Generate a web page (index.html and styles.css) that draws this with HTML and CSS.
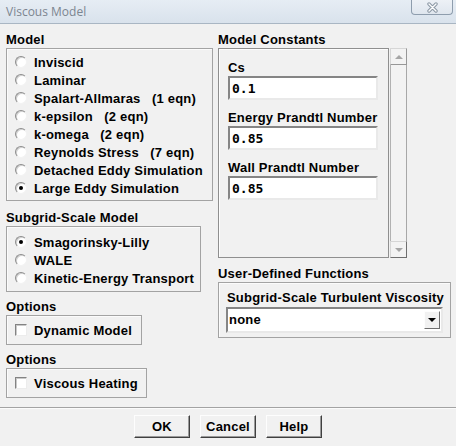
FILE: index.html
```html
<!DOCTYPE html>
<html lang="en">
<head>
    <meta charset="UTF-8">
    <title>Viscous Model</title>
    <link rel="stylesheet" href="styles.css">
</head>
<body>
    <div class="window">
        <div class="titlebar">
            <span class="title">Viscous Model</span>
            <button class="close-btn">
                <svg width="11" height="11" viewBox="0 0 11 11">
                    <path d="M2 2 L9 9 M9 2 L2 9" stroke="#8b97a4" stroke-width="3.4" stroke-linecap="round"/>
                    <path d="M2 2 L9 9 M9 2 L2 9" stroke="#fbfcfd" stroke-width="1.4" stroke-linecap="round"/>
                </svg>
            </button>
        </div>

        <div class="content">
            <div class="col col-left">
                <div class="group-label">Model</div>
                <div class="frame model-frame">
                    <label class="radio"><span class="radio-mark"></span>Inviscid</label>
                    <label class="radio"><span class="radio-mark"></span>Laminar</label>
                    <label class="radio"><span class="radio-mark"></span>Spalart-Allmaras   (1 eqn)</label>
                    <label class="radio"><span class="radio-mark"></span>k-epsilon   (2 eqn)</label>
                    <label class="radio"><span class="radio-mark"></span>k-omega   (2 eqn)</label>
                    <label class="radio"><span class="radio-mark"></span>Reynolds Stress   (7 eqn)</label>
                    <label class="radio"><span class="radio-mark"></span>Detached Eddy Simulation</label>
                    <label class="radio"><span class="radio-mark checked"></span>Large Eddy Simulation</label>
                </div>

                <div class="group-label spaced">Subgrid-Scale Model</div>
                <div class="frame subgrid-frame">
                    <label class="radio"><span class="radio-mark checked"></span>Smagorinsky-Lilly</label>
                    <label class="radio"><span class="radio-mark"></span>WALE</label>
                    <label class="radio"><span class="radio-mark"></span>Kinetic-Energy Transport</label>
                </div>

                <div class="group-label spaced-sm">Options</div>
                <div class="frame option-frame dynamic">
                    <label class="check"><span class="check-mark"></span>Dynamic Model</label>
                </div>

                <div class="group-label spaced-sm">Options</div>
                <div class="frame option-frame heating">
                    <label class="check"><span class="check-mark"></span>Viscous Heating</label>
                </div>
            </div>

            <div class="col col-right">
                <div class="group-label">Model Constants</div>
                <div class="constants-wrap">
                    <div class="constants-frame">
                        <div class="field">
                            <div class="field-label">Cs</div>
                            <input class="entry" type="text" value="0.1">
                        </div>
                        <div class="field">
                            <div class="field-label">Energy Prandtl Number</div>
                            <input class="entry" type="text" value="0.85">
                        </div>
                        <div class="field">
                            <div class="field-label">Wall Prandtl Number</div>
                            <input class="entry" type="text" value="0.85">
                        </div>
                    </div>
                    <div class="scrollbar">
                        <div class="scroll-btn"><span class="arrow-up"></span></div>
                        <div class="scroll-track"></div>
                        <div class="scroll-btn down"><span class="arrow-down"></span></div>
                    </div>
                </div>

                <div class="group-label spaced-udf">User-Defined Functions</div>
                <div class="frame udf-frame">
                    <div class="udf-label">Subgrid-Scale Turbulent Viscosity</div>
                    <div class="select">
                        <span class="select-value">none</span>
                        <span class="select-btn"><span class="arrow-black"></span></span>
                    </div>
                </div>
            </div>
        </div>

        <div class="footer">
            <button class="btn">OK</button>
            <button class="btn">Cancel</button>
            <button class="btn">Help</button>
        </div>
    </div>
</body>
</html>
```

FILE: styles.css
```css
* {
    margin: 0;
    padding: 0;
    box-sizing: border-box;
}

body {
    width: 456px;
    height: 446px;
    overflow: hidden;
    background: #f1f1f1;
    font-family: "Liberation Sans", Arial, sans-serif;
    font-size: 13px;
    font-weight: bold;
    letter-spacing: 0.2px;
    color: #000;
}

.window {
    display: flex;
    flex-direction: column;
    height: 446px;
}

/* title bar */
.titlebar {
    height: 24px;
    display: flex;
    justify-content: space-between;
    align-items: flex-start;
    background: linear-gradient(to bottom, #e6edf4, #d9e2ec);
    border-bottom: 1px solid #a9b6c3;
}

.title {
    font-family: "Open Sans", "Noto Sans", sans-serif;
    font-weight: normal;
    font-size: 12px;
    letter-spacing: 0;
    color: #7c8590;
    line-height: 23px;
    padding-left: 6px;
}

.close-btn {
    width: 42px;
    height: 15px;
    margin-right: 3px;
    border: 1px solid #8e9dad;
    border-top: none;
    border-radius: 0 0 4px 4px;
    background: linear-gradient(to bottom, #edf1f6, #dfe6ee);
    display: flex;
    align-items: center;
    justify-content: center;
}

/* layout */
.content {
    display: flex;
    gap: 5px;
    padding: 7px 5px 0 6px;
}

.col {
    display: flex;
    flex-direction: column;
    align-items: flex-start;
}

.col-left {
    width: 207px;
}

.col-right {
    width: 233px;
}

.group-label {
    line-height: 17px;
    white-space: nowrap;
}

.group-label.spaced {
    margin-top: 8px;
}

.group-label.spaced-sm {
    margin-top: 6px;
}

.group-label.spaced-udf {
    margin-top: 7px;
}

.frame {
    border: 1px solid #a3a3a3;
    box-shadow: inset 1px 1px 0 #fbfbfb;
}

.model-frame {
    width: 207px;
    padding: 4px 0 3px 8px;
}

.subgrid-frame {
    width: 195px;
    padding: 6px 0 4px 8px;
}

.option-frame {
    padding: 5px 0 5px 8px;
}

.option-frame.dynamic {
    width: 136px;
}

.option-frame.heating {
    width: 141px;
}

/* radio + checkbox */
.radio,
.check {
    display: flex;
    align-items: center;
    gap: 7px;
    height: 18px;
    white-space: pre;
}

.radio-mark {
    width: 12px;
    height: 12px;
    border-radius: 50%;
    background: #fff;
    border: 1px solid;
    border-color: #8d8d8d #f2f2f2 #f2f2f2 #8d8d8d;
    box-shadow: inset 1px 1px 0 #d0d0d0;
    display: flex;
    align-items: center;
    justify-content: center;
}

.radio-mark.checked::after {
    content: "";
    width: 4px;
    height: 4px;
    border-radius: 50%;
    background: #000;
}

.check-mark {
    width: 12px;
    height: 12px;
    background: #fff;
    border: 1px solid;
    border-color: #838383 #ececec #ececec #838383;
    box-shadow: inset 1px 1px 0 #c9c9c9;
}

/* model constants */
.constants-wrap {
    display: flex;
    gap: 1px;
}

.constants-frame {
    width: 171px;
    height: 210px;
    padding: 10px 0 0 9px;
    border: 1px solid #8f8f8f;
    box-shadow: inset 1px 1px 0 #fdfdfd;
    display: flex;
    flex-direction: column;
    gap: 9px;
}

.field-label {
    line-height: 17px;
    white-space: nowrap;
}

.entry {
    display: block;
    width: 150px;
    height: 24px;
    padding-left: 2px;
    background: #fff;
    border: 2px solid;
    border-color: #858585 #e9e9e9 #e9e9e9 #858585;
    font-family: "DejaVu Sans Mono", "Liberation Mono", monospace;
    font-weight: bold;
    font-size: 13px;
    letter-spacing: 0;
    color: #000;
    outline: none;
}

.scrollbar {
    width: 17px;
    height: 210px;
    display: flex;
    flex-direction: column;
}

.scroll-btn {
    height: 17px;
    border: 1px solid;
    border-color: #d6d6d6 #979797 #979797 #d6d6d6;
    background: #f3f3f3;
    display: flex;
    align-items: center;
    justify-content: center;
}

.scroll-btn.down {
    border-color: #d6d6d6 #6f6f6f #6f6f6f #d6d6d6;
}

.scroll-track {
    flex: 1;
    border-left: 1px solid #b2b2b2;
    border-right: 1px solid #a8a8a8;
    background: #f3f3f3;
}

.arrow-up {
    border-left: 4px solid transparent;
    border-right: 4px solid transparent;
    border-bottom: 4px solid #a6a6a6;
}

.arrow-down {
    border-left: 4px solid transparent;
    border-right: 4px solid transparent;
    border-top: 4px solid #a6a6a6;
}

/* user defined functions */
.udf-frame {
    width: 233px;
    padding: 6px 7px 4px 7px;
}

.udf-label {
    line-height: 18px;
    white-space: nowrap;
    padding-left: 1px;
}

.select {
    height: 26px;
    display: flex;
    align-items: stretch;
    padding: 2px 1px 2px 1px;
    background: #fff;
    border: 2px solid;
    border-color: #858585 #e9e9e9 #e9e9e9 #858585;
}

.select-value {
    flex: 1;
    line-height: 18px;
}

.select-btn {
    width: 16px;
    background: #f1f1f1;
    border: 1px solid;
    border-color: #fdfdfd #6e6e6e #6e6e6e #fdfdfd;
    display: flex;
    align-items: center;
    justify-content: center;
}

.arrow-black {
    border-left: 4px solid transparent;
    border-right: 4px solid transparent;
    border-top: 4px solid #000;
}

/* bottom buttons */
.footer {
    margin-top: 9px;
    padding-top: 7px;
    border-top: 1px solid #a3a3a3;
    box-shadow: inset 0 1px 0 #fbfbfb;
    display: flex;
    justify-content: center;
    gap: 10px;
}

.btn {
    width: 56px;
    height: 23px;
    background: #f1f1f1;
    border: 1px solid;
    border-color: #fdfdfd #404040 #404040 #fdfdfd;
    box-shadow: inset -1px -1px 0 #9a9a9a;
    font-family: "Liberation Sans", Arial, sans-serif;
    font-weight: bold;
    font-size: 13px;
    letter-spacing: 0.2px;
    color: #000;
}
```
